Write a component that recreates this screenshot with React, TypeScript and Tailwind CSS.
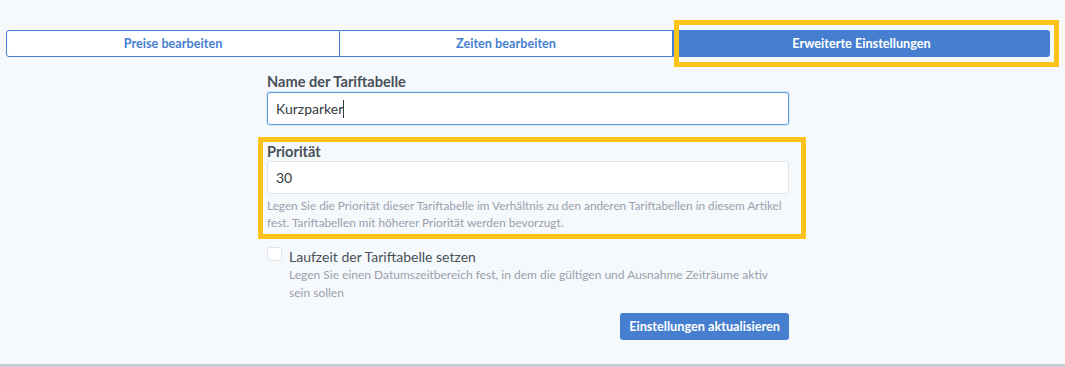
const font = { fontFamily: "Lato, 'Liberation Sans', sans-serif" }

function Tabs() {
  return (
    <div className="flex ml-[6px] w-[1044px] h-[27px] text-[12.7px] font-bold">
      <button className="w-[334px] bg-white border border-[#467fcf] rounded-l-[3px] text-[#467fcf]">Preise bearbeiten</button>
      <button className="w-[333px] bg-white border border-l-0 border-[#467fcf] text-[#467fcf]">Zeiten bearbeiten</button>
      <div className="relative flex-1">
        <button className="w-full h-full bg-[#467fcf] rounded-r-[3px] text-white">Erweiterte Einstellungen</button>
        <div className="absolute left-[1px] -right-[9px] -top-[10px] -bottom-[10px] border-[5px] border-[#fcc419] pointer-events-none" />
      </div>
    </div>
  )
}

export default function App() {
  return (
    <div className="h-[367px] bg-[#f5f9fc] border-b-[3px] border-[#c9cdd4] pt-[30px] text-[#495057]" style={font}>
      <Tabs />

      <div className="ml-[267px] w-[522px] mt-[15px]">
        <label className="block text-[14.6px] font-bold leading-[19px] mb-[1px]">Name der Tariftabelle</label>
        <div className="h-[33px] bg-white border border-[#5a9be6] rounded-[3px] flex items-center px-[8px] text-[14px] text-[#343a40] shadow-[0_0_0_1px_rgba(70,127,207,0.15)]">
          Kurzparker<span className="inline-block w-px h-[18px] bg-[#343a40]" />
        </div>

        <div className="relative mt-[17px] pb-[3px]">
          <div className="absolute -left-[9px] -right-[17px] -top-[5px] -bottom-[5px] border-[5px] border-[#fcc419] pointer-events-none" />
          <label className="block text-[14.6px] font-bold leading-[19px]">Priorität</label>
          <div className="h-[33px] bg-white border border-[#dfe3ea] rounded-[3px] flex items-center px-[8px] text-[14px] text-[#343a40]">30</div>
          <p className="text-[11.8px] leading-[17px] text-[#9aa0ac] mt-[3px]">
            Legen Sie die Priorität dieser Tariftabelle im Verhältnis zu den anderen Tariftabellen in diesem Artikel fest. Tariftabellen mit höherer Priorität werden bevorzugt.
          </p>
        </div>

        <div className="flex gap-[7px] mt-[13px]">
          <span className="w-[15px] h-[14px] shrink-0 rounded-[3px] border border-[#dfe3ea] bg-white" />
          <div>
            <div className="text-[14px] leading-[19px]">Laufzeit der Tariftabelle setzen</div>
            <p className="text-[12px] leading-[18px] text-[#9aa0ac] w-[490px]">
              Legen Sie einen Datumszeitbereich fest, in dem die gültigen und Ausnahme Zeiträume aktiv sein sollen
            </p>
          </div>
        </div>

        <div className="flex justify-end mt-[11px]">
          <button className="h-[27px] px-[9px] bg-[#467fcf] rounded-[3px] text-white text-[12.7px] font-bold">Einstellungen aktualisieren</button>
        </div>
      </div>
    </div>
  )
}
